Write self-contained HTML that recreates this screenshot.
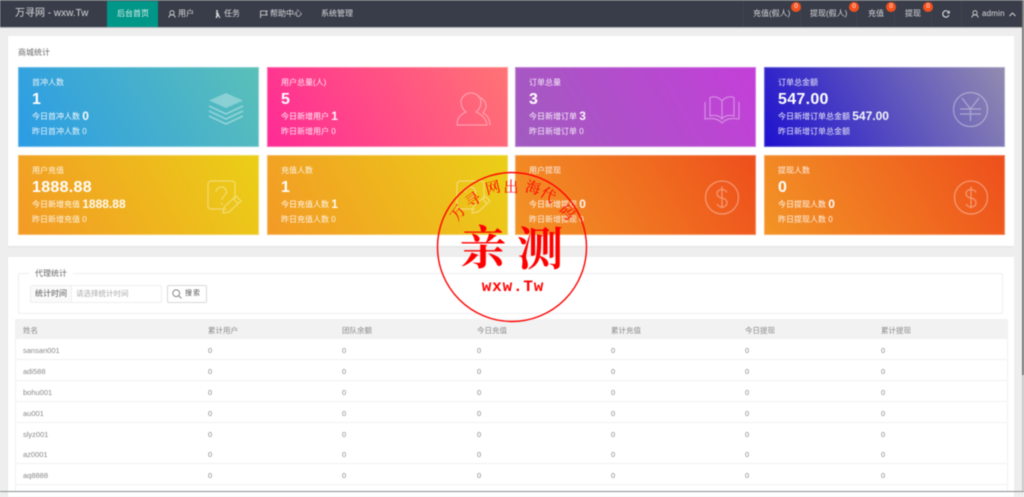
<!DOCTYPE html>
<html lang="zh"><head><meta charset="utf-8"><title>万寻网</title>
<style>
*{box-sizing:border-box;margin:0;padding:0}
html,body{width:1024px;height:492px;overflow:hidden;background:#eee;font-family:"Liberation Sans","Noto Sans CJK SC",sans-serif}
#blur{position:absolute;left:0;top:0;width:1024px;height:492px;filter:blur(.45px)}
.a{position:absolute;white-space:nowrap;line-height:1}
.hd{position:absolute;left:0;top:1px;width:1024px;height:26px;background:#393d49}
.n{font-size:8px;color:rgba(255,255,255,.8);top:10px}
.sep{position:absolute;top:1px;width:1px;height:26px;background:#40444f}
.b{position:absolute;top:2px;width:10px;height:10px;border-radius:50%;background:#f4511e;color:#fff;font-size:6.5px;line-height:10px;text-align:center}
.card{position:absolute;background:#fff;box-shadow:0 1px 2px rgba(0,0,0,.06)}
.t{position:absolute;width:241px;height:80px;box-shadow:inset 0 0 0 1px rgba(255,255,255,.28);color:#fff}
.t .l1{position:absolute;left:14px;top:11px;font-size:8px;line-height:10px;opacity:.9;white-space:nowrap}
.t .l2{position:absolute;left:14px;top:24px;font-size:16px;line-height:18px;font-weight:bold;white-space:nowrap}
.t .l3{position:absolute;left:14px;top:42px;font-size:8px;line-height:15px;opacity:.95;white-space:nowrap}
.t .l3 b{font-size:12px;margin-left:0;vertical-align:-1px}
.t .l4{position:absolute;left:14px;top:59px;font-size:8px;line-height:11px;opacity:.9;white-space:nowrap}
.t svg{position:absolute;left:189px;top:25px;width:38px;height:38px;fill:none;stroke:#fff;stroke-width:1.2;opacity:.38}
.g1{background-image:linear-gradient(60deg,#2b9ce6,#5bc0b8)}
.g2{background-image:linear-gradient(60deg,#ff2a96,#ff7474)}
.g3{background-image:linear-gradient(60deg,#a15cbf,#c43fd9)}
.g4{background-image:linear-gradient(60deg,#1e11cf,#928cb0)}
.g5{background-image:linear-gradient(60deg,#f39a26,#ebcf17)}
.g6{background-image:linear-gradient(60deg,#f39426,#ee4f1c)}
.r{position:absolute;left:15px;width:993px;height:21px;border:1px solid #f2f2f2;border-width:0 1px 1px 1px;background:#fff;font-size:7.5px;color:#888}
.r span{position:absolute;top:7px;line-height:9px;white-space:nowrap}
.r.h{background:#f2f2f2;color:#888}
.c1{left:7px}.c2{left:192px}.c3{left:326px}.c4{left:461px}.c5{left:595px}.c6{left:729px}.c7{left:865px}
.s{font-family:"Noto Serif CJK SC","Liberation Serif",serif;fill:#f00}
</style></head><body>
<div id="blur">
<div class="a" style="left:0;top:0;width:1024px;height:1px;background:#5a5d66"></div>
<div class="hd"></div>
<div class="a" style="left:0;top:27px;width:1024px;height:1px;background:#b5b6ba"></div>
<div class="a" style="left:15px;top:9px;font-size:10px;color:#d8d8da">万寻网 - wxw.Tw</div>
<div class="a" style="left:107px;top:1px;width:51px;height:26px;background:#009688"></div>
<div class="a n" style="left:117px;color:#e4f2f0">后台首页</div>
<svg class="a" style="left:168px;top:10px" width="8" height="8" viewBox="0 0 8 8" fill="none" stroke="#ddd" stroke-width=".8"><circle cx="4" cy="2.8" r="2.1"/><path d="M.8 7.6c.2-1.8 1.4-2.8 3.2-2.8s3 1 3.2 2.8"/></svg>
<div class="a n" style="left:178px">用户</div>
<svg class="a" style="left:214px;top:10px" width="7" height="8" viewBox="0 0 7 8" fill="#ddd"><circle cx="3" cy="1" r="1"/><path d="M2 2.2h2L5 5l1.5 3H5.4L4 5.6 3 8H1.6L2.4 5z"/></svg>
<div class="a n" style="left:224px">任务</div>
<svg class="a" style="left:260px;top:10px" width="8" height="8" viewBox="0 0 8 8" fill="none" stroke="#ddd" stroke-width=".8"><path d="M.6 8V1h6.6L6 3l1.2 2H.6"/></svg>
<div class="a n" style="left:270px">帮助中心</div>
<div class="a n" style="left:321px">系统管理</div>
<div class="sep" style="left:743px"></div><div class="sep" style="left:800px"></div><div class="sep" style="left:856px"></div><div class="sep" style="left:894px"></div><div class="sep" style="left:931px"></div><div class="sep" style="left:961px"></div>
<div class="a n" style="left:753px">充值(假人)</div><div class="b" style="left:791px">0</div>
<div class="a n" style="left:810px">提现(假人)</div><div class="b" style="left:849px">0</div>
<div class="a n" style="left:868px">充值</div><div class="b" style="left:886px">0</div>
<div class="a n" style="left:905px">提现</div><div class="b" style="left:923px">0</div>
<svg class="a" style="left:942px;top:10px" width="8" height="8" viewBox="0 0 8 8" fill="none" stroke="#eee" stroke-width="1"><path d="M6.9 2.6A3.2 3.2 0 1 0 7 5"/><path d="M7.3.8v2.3H5" stroke-width=".8"/></svg>
<svg class="a" style="left:971px;top:10px" width="8" height="8" viewBox="0 0 8 8" fill="none" stroke="#ddd" stroke-width=".8"><circle cx="4" cy="2.8" r="2.1"/><path d="M.8 7.6c.2-1.8 1.4-2.8 3.2-2.8s3 1 3.2 2.8"/></svg>
<div class="a n" style="left:982px;color:#ddd;letter-spacing:.2px">admin</div>
<svg class="a" style="left:1009px;top:12px" width="7" height="5" viewBox="0 0 7 5" fill="none" stroke="#ddd" stroke-width=".9"><path d="M.5 4L3.5 1l3 3"/></svg>

<div class="card" style="left:8px;top:36px;width:1006px;height:210px"></div>
<div class="a" style="left:18px;top:49px;font-size:8px;color:#666">商城统计</div>

<div class="t g1" style="left:18px;top:67px"><div class="l1">首冲人数</div><div class="l2">1</div><div class="l3">今日首冲人数 <b>0</b></div><div class="l4">昨日首冲人数 0</div>
<svg viewBox="0 0 38 38"><path d="M19 1l17 7.5-17 7.5L2 8.5z" fill="#fff" stroke="none" opacity=".85"/><path d="M2 14l17 8 17-8M2 19l17 8 17-8M2 24l17 8 17-8" stroke-width="1.6"/></svg></div>
<div class="t g2" style="left:267px;top:67px"><div class="l1">用户总量(人)</div><div class="l2">5</div><div class="l3">今日新增用户 <b>1</b></div><div class="l4">昨日新增用户 0</div>
<svg viewBox="0 0 38 38"><path d="M1 33c0-7 4-11 9-13-3-2-5-6-5-10C5 5 10 1 15 1s10 4 10 9c0 4-2 8-5 10 5 2 10 6 11 13z"/><path d="M22 5c5 1 8 5 8 9 0 3-2 5-3 7 4 2 7 6 7 12"/></svg></div>
<div class="t g3" style="left:515px;top:67px"><div class="l1">订单总量</div><div class="l2">3</div><div class="l3">今日新增订单 <b>3</b></div><div class="l4">昨日新增订单 0</div>
<svg viewBox="0 0 38 38"><path d="M18 9C15 5 10 4 6 5.5V24c4-1 9-1 12 3 3-4 8-4 12-3V5.5C26 4 21 5 18 9zM18 9v18"/><path d="M1 10v17c6-1 13-1 17 4 4-5 11-5 17-4V10"/></svg></div>
<div class="t g4" style="left:764px;top:67px"><div class="l1">订单总金额</div><div class="l2" style="letter-spacing:.3px">547.00</div><div class="l3">今日新增订单总金额 <b>547.00</b></div><div class="l4">昨日新增订单总金额</div>
<svg viewBox="0 0 38 38"><circle cx="17.5" cy="17.5" r="17"/><path d="M9 6l8.5 11L26 6M7 17h21M7 22h21M17.5 17v12"/></svg></div>

<div class="t g5" style="left:18px;top:155px"><div class="l1">用户充值</div><div class="l2" style="letter-spacing:.3px">1888.88</div><div class="l3">今日新增充值 <b>1888.88</b></div><div class="l4">昨日新增充值 0</div>
<svg viewBox="0 0 38 38"><path d="M19 29H4a3 3 0 0 1-3-3V4a3 3 0 0 1 3-3h21a3 3 0 0 1 3 3v15"/><path d="M9 12c0-3 3-5 5.5-5s5 2 5 5-4.500 4-4.500 8M15 23v2"/><path d="M16 33l1-6 12-11 5 5-12 11zM26 18.500l5 5"/></svg></div>
<div class="t g5" style="left:267px;top:155px"><div class="l1">充值人数</div><div class="l2">1</div><div class="l3">今日充值人数 <b>1</b></div><div class="l4">昨日充值人数 0</div>
<svg viewBox="0 0 38 38"><path d="M19 29H4a3 3 0 0 1-3-3V4a3 3 0 0 1 3-3h21a3 3 0 0 1 3 3v15"/><path d="M9 12c0-3 3-5 5.5-5s5 2 5 5-4.500 4-4.500 8M15 23v2"/><path d="M16 33l1-6 12-11 5 5-12 11zM26 18.500l5 5"/></svg></div>
<div class="t g6" style="left:515px;top:155px"><div class="l1">用户提现</div><div class="l3">今日新增提现 <b>0</b></div><div class="l4">昨日新增提现 0</div>
<svg viewBox="0 0 38 38"><circle cx="18" cy="17.500" r="16.500"/><path d="M23 12.500c-1-2-3-3-5-3s-5 1-5 4 2 4 5 4.500 5 2 5 5-3 4-5 4-4-1-5-3M18 6.500v22"/></svg></div>
<div class="t g6" style="left:764px;top:155px"><div class="l1">提现人数</div><div class="l2">0</div><div class="l3">今日提现人数 <b>0</b></div><div class="l4">昨日提现人数 0</div>
<svg viewBox="0 0 38 38"><circle cx="18" cy="17.500" r="16.500"/><path d="M23 12.500c-1-2-3-3-5-3s-5 1-5 4 2 4 5 4.500 5 2 5 5-3 4-5 4-4-1-5-3M18 6.500v22"/></svg></div>

<div class="card" style="left:8px;top:257px;width:1006px;height:240px"></div>
<div class="a" style="left:18px;top:273px;width:985px;height:41px;border:1px solid #eee;border-radius:2px"></div>
<div class="a" style="left:29px;top:269px;background:#fff;padding:0 6px;font-size:8px;line-height:9px;color:#666">代理统计</div>
<div class="a" style="left:30px;top:285px;width:132px;height:18px;border:1px solid #eee;border-radius:2px;background:#fff"></div>
<div class="a" style="left:31px;top:286px;width:41px;height:16px;background:#fafafa;border-right:1px solid #eee;font-size:8px;line-height:16px;color:#555;text-align:center">统计时间</div>
<div class="a" style="left:76px;top:290px;font-size:7.5px;color:#aaa">请选择统计时间</div>
<div class="a" style="left:167px;top:285px;width:40px;height:18px;border:1px solid #d8d8d8;border-radius:2px;background:#fff"></div>
<svg class="a" style="left:172px;top:289px" width="10" height="10" viewBox="0 0 10 10" fill="none" stroke="#777" stroke-width=".9"><circle cx="4.2" cy="4.2" r="3.4"/><path d="M6.8 6.8L9.4 9.4"/></svg>
<div class="a" style="left:185px;top:290px;font-size:7px;color:#555;letter-spacing:1px">搜索</div>

<div class="r h" style="top:319px;height:20px"><span class="c1">姓名</span><span class="c2">累计用户</span><span class="c3">团队余额</span><span class="c4">今日充值</span><span class="c5">累计充值</span><span class="c6">今日提现</span><span class="c7">累计提现</span></div>
<div class="r" style="top:339px"><span class="c1">sansan001</span><span class="c2">0</span><span class="c3">0</span><span class="c4">0</span><span class="c5">0</span><span class="c6">0</span><span class="c7">0</span></div>
<div class="r" style="top:360px"><span class="c1">adi588</span><span class="c2">0</span><span class="c3">0</span><span class="c4">0</span><span class="c5">0</span><span class="c6">0</span><span class="c7">0</span></div>
<div class="r" style="top:381px"><span class="c1">bohu001</span><span class="c2">0</span><span class="c3">0</span><span class="c4">0</span><span class="c5">0</span><span class="c6">0</span><span class="c7">0</span></div>
<div class="r" style="top:402px"><span class="c1">au001</span><span class="c2">0</span><span class="c3">0</span><span class="c4">0</span><span class="c5">0</span><span class="c6">0</span><span class="c7">0</span></div>
<div class="r" style="top:423px"><span class="c1">slyz001</span><span class="c2">0</span><span class="c3">0</span><span class="c4">0</span><span class="c5">0</span><span class="c6">0</span><span class="c7">0</span></div>
<div class="r" style="top:443px"><span class="c1">az0001</span><span class="c2">0</span><span class="c3">0</span><span class="c4">0</span><span class="c5">0</span><span class="c6">0</span><span class="c7">0</span></div>
<div class="r" style="top:464px"><span class="c1">aq8888</span><span class="c2">0</span><span class="c3">0</span><span class="c4">0</span><span class="c5">0</span><span class="c6">0</span><span class="c7">0</span></div>
<div class="r" style="top:485px;height:7px"></div>

<div class="a" style="left:1014px;top:28px;width:8px;height:464px;background:#eee"></div>
<div class="a" style="left:1022px;top:0;width:2px;height:375px;background:#777"></div>
<div class="a" style="left:1022px;top:375px;width:2px;height:117px;background:#c8c8c8"></div>
<div class="a" style="left:0;top:490.5px;width:1024px;height:1.500px;background:#8a8d90"></div>

<svg class="a" style="left:430px;top:165px;overflow:visible" width="164" height="164" viewBox="430 165 164 164">
<circle cx="512" cy="247" r="74.5" fill="none" stroke="#f00" stroke-width="1.4"/>
<g class="s" font-size="15" text-anchor="middle">
<text transform="translate(458 213) rotate(-52)" y="5">万</text>
<text transform="translate(473 200) rotate(-36)" y="5">寻</text>
<text transform="translate(493 188) rotate(-14)" y="5">网</text>
<text transform="translate(511 187)" y="5">出</text>
<text transform="translate(533 188) rotate(14)" y="5">海</text>
<text transform="translate(548 195) rotate(34)" y="5">代</text>
<text transform="translate(567 212) rotate(50)" y="5">码</text>
<text x="483" y="264" font-size="46" font-weight="bold">亲</text>
<text x="540" y="265" font-size="46" font-weight="bold">测</text>
</g>
<text x="513" y="291" text-anchor="middle" font-family="'Liberation Mono',monospace" font-size="16" font-weight="bold" fill="#f00" letter-spacing=".8">wxw.Tw</text>
</svg>
</div>
</body></html>
